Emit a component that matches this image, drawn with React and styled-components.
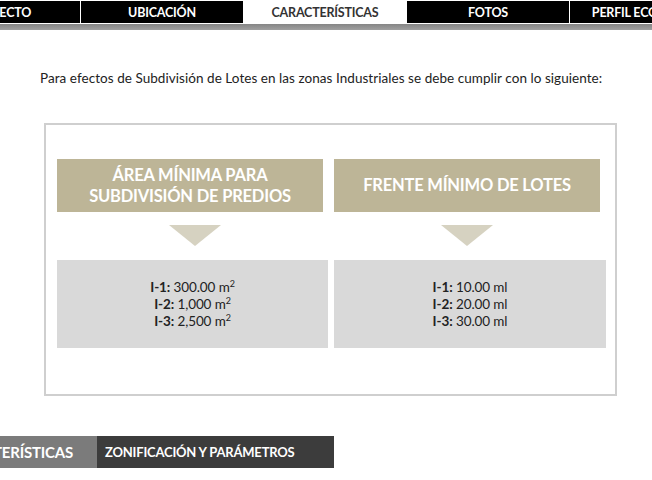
import React from "react";
import styled, { createGlobalStyle } from "styled-components";

const Global = createGlobalStyle`
  html, body { margin: 0; padding: 0; background: #fff; }
  body { font-family: Lato, "Open Sans", sans-serif; overflow: hidden; }
`;

const Page = styled.div`
  width: 652px;
  height: 480px;
  overflow: hidden;
  position: relative;
  background: #fff;
`;

const TabBar = styled.div`
  display: flex;
  margin-top: 1px;
  margin-left: -82px;
  height: 22px;
`;

const Tab = styled.div`
  flex: 0 0 162px;
  height: 22px;
  display: flex;
  align-items: center;
  justify-content: center;
  background: ${p => (p.$active ? "#fff" : "#000")};
  color: ${p => (p.$active ? "#333" : "#fff")};
  border-right: 1px solid #fff;
  font-weight: 700;
  font-size: 12.5px;
  letter-spacing: -0.2px;
  white-space: nowrap;
`;

const GrayBar = styled.div`
  margin-top: 1px;
  height: 6px;
  background: linear-gradient(#858585, #a0a0a0);
`;

const Intro = styled.p`
  margin: 39px 0 0 40px;
  font-size: 13.5px;
  letter-spacing: 0.05px;
  color: #222;
  line-height: 18px;
`;

const Frame = styled.div`
  margin: 36px 0 0 44px;
  width: 573px;
  height: 273px;
  border: 2px solid #cfcfcf;
  box-sizing: border-box;
  padding: 34px 9px 0 11px;
  display: grid;
  grid-template-columns: 271px 272px;
  column-gap: 6px;
  align-items: start;
`;

const Column = styled.div`
  display: flex;
  flex-direction: column;
  align-items: stretch;
`;

const Header = styled.div`
  width: 266px;
  height: 53px;
  background: #bdb597;
  color: #fff;
  font-weight: 700;
  font-size: 16.5px;
  letter-spacing: -0.2px;
  line-height: 21px;
  display: flex;
  align-items: center;
  justify-content: center;
  text-align: center;
`;

const Arrow = styled.div`
  width: 0;
  height: 0;
  margin: 13px 0 0 ${p => p.$offset}px;
  border-left: 26px solid transparent;
  border-right: 26px solid transparent;
  border-top: 21px solid #d6d2c1;
`;

const ValueBox = styled.div`
  margin-top: 14px;
  height: 88px;
  background: #d9d9d9;
  display: flex;
  flex-direction: column;
  align-items: center;
  justify-content: center;
  font-size: 13.5px;
  line-height: 17px;
  color: #222;
  letter-spacing: -0.1px;
`;

const Line = styled.div`
  white-space: nowrap;
  height: 17px;
  b { font-weight: 700; }
`;

const Sup = styled.span`
  font-size: 9px;
  line-height: 0;
  vertical-align: 5px;
`;

const SubTabs = styled.div`
  display: flex;
  margin-top: 40px;
  height: 32px;
`;

const SubTab = styled.div`
  height: 32px;
  display: flex;
  align-items: center;
  color: #fff;
  font-weight: 700;
  white-space: nowrap;
  background: ${p => p.$bg};
  width: ${p => p.$w}px;
  flex: 0 0 ${p => p.$w}px;
  font-size: ${p => p.$fs}px;
  padding-left: ${p => p.$pl}px;
  box-sizing: border-box;
  justify-content: ${p => (p.$end ? "flex-end" : "flex-start")};
  padding-right: ${p => (p.$end ? 24 : 0)}px;
  letter-spacing: -0.2px;
`;

const sup = <Sup>2</Sup>;

export default function App() {
  return (
    <Page>
      <Global />
      <TabBar>
        <Tab>PROYECTO</Tab>
        <Tab>UBICACIÓN</Tab>
        <Tab $active>CARACTERÍSTICAS</Tab>
        <Tab>FOTOS</Tab>
        <Tab>PERFIL ECONÓMICO</Tab>
      </TabBar>
      <GrayBar />
      <Intro>
        Para efectos de Subdivisión de Lotes en las zonas Industriales se debe cumplir con lo siguiente:
      </Intro>
      <Frame>
        <Column>
          <Header>
            ÁREA MÍNIMA PARA
            <br />
            SUBDIVISIÓN DE PREDIOS
          </Header>
          <Arrow $offset={112} />
          <ValueBox>
            <Line><b>I-1:</b> 300.00 m{sup}</Line>
            <Line><b>I-2:</b> 1,000 m{sup}</Line>
            <Line><b>I-3:</b> 2,500 m{sup}</Line>
          </ValueBox>
        </Column>
        <Column>
          <Header>FRENTE MÍNIMO DE LOTES</Header>
          <Arrow $offset={107} />
          <ValueBox>
            <Line><b>I-1:</b> 10.00 ml</Line>
            <Line><b>I-2:</b> 20.00 ml</Line>
            <Line><b>I-3:</b> 30.00 ml</Line>
          </ValueBox>
        </Column>
      </Frame>
      <SubTabs>
        <SubTab $bg="#7b7b7b" $w={97} $fs={15} $pl={0} $end>
          CARACTERÍSTICAS
        </SubTab>
        <SubTab $bg="#3c3c3c" $w={237} $fs={13} $pl={8}>
          ZONIFICACIÓN Y PARÁMETROS
        </SubTab>
      </SubTabs>
    </Page>
  );
}
